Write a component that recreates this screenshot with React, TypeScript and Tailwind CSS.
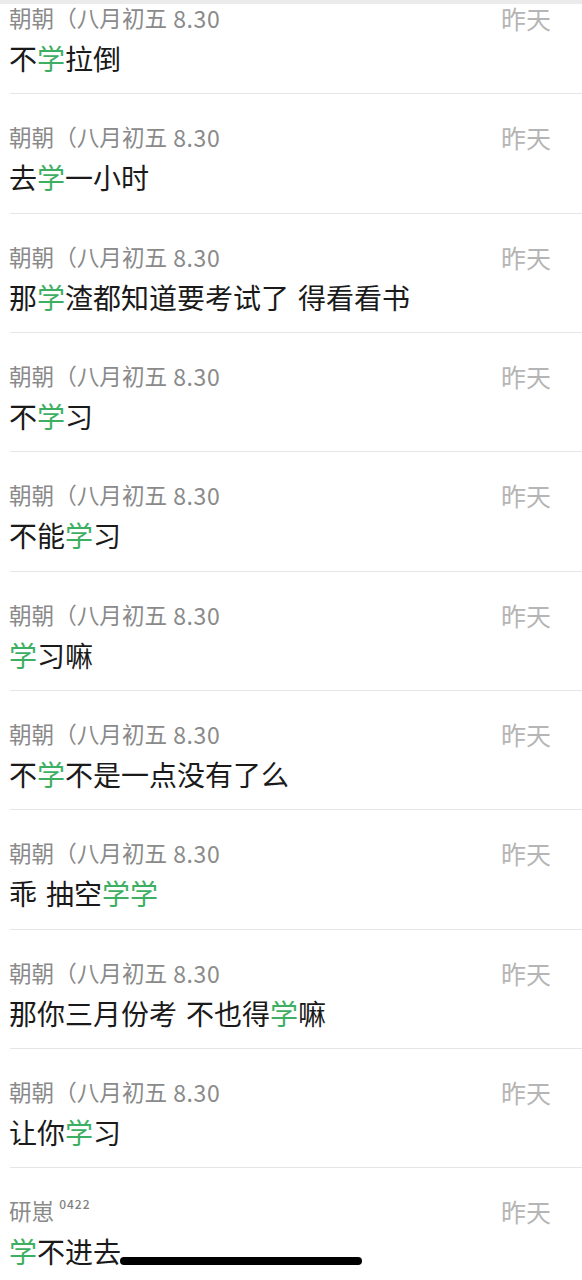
import React from "react";

type Part = { t: string; g?: boolean };
type Row = { name: string; num?: string; sup?: string; msg: Part[] };

const rows: Row[] = [
  { name: "朝朝（八月初五", num: "8.30", msg: [{ t: "不" }, { t: "学", g: true }, { t: "拉倒" }] },
  { name: "朝朝（八月初五", num: "8.30", msg: [{ t: "去" }, { t: "学", g: true }, { t: "一小时" }] },
  { name: "朝朝（八月初五", num: "8.30", msg: [{ t: "那" }, { t: "学", g: true }, { t: "渣都知道要考试了" }, { t: " ", }, { t: "得看看书" }] },
  { name: "朝朝（八月初五", num: "8.30", msg: [{ t: "不" }, { t: "学", g: true }, { t: "习" }] },
  { name: "朝朝（八月初五", num: "8.30", msg: [{ t: "不能" }, { t: "学", g: true }, { t: "习" }] },
  { name: "朝朝（八月初五", num: "8.30", msg: [{ t: "学", g: true }, { t: "习嘛" }] },
  { name: "朝朝（八月初五", num: "8.30", msg: [{ t: "不" }, { t: "学", g: true }, { t: "不是一点没有了么" }] },
  { name: "朝朝（八月初五", num: "8.30", msg: [{ t: "乖" }, { t: " " }, { t: "抽空" }, { t: "学学", g: true }] },
  { name: "朝朝（八月初五", num: "8.30", msg: [{ t: "那你三月份考" }, { t: " " }, { t: "不也得" }, { t: "学", g: true }, { t: "嘛" }] },
  { name: "朝朝（八月初五", num: "8.30", msg: [{ t: "让你" }, { t: "学", g: true }, { t: "习" }] },
  { name: "研崽", sup: "0422", msg: [{ t: "学", g: true }, { t: "不进去" }] },
];

const font = { fontFamily: '"Noto Sans CJK SC", "Noto Sans", sans-serif' };

export default function App() {
  return (
    <div className="relative h-[1280px] w-[582px] overflow-hidden bg-white" style={font}>
      <div className="mt-[-25px] flex flex-col">
        {rows.map((r, i) => (
          <div key={i} className="ml-[10px] h-[119.33px] shrink-0 border-b border-[#e6e6e6] pr-[30px] pt-[28px]">
            <div className="flex items-start justify-between">
              <div className="ml-[-1px] flex items-start text-[22.6px] leading-[30px] text-[#8a8a8a]">
                <span>{r.name}</span>
                {r.num && <span className="ml-[6px] text-[23px] tracking-[0.6px]">{r.num}</span>}
                {r.sup && <span className="ml-[5px] mt-[-2px] text-[12px] font-medium leading-[20px] tracking-[1px] text-[#808080]">{r.sup}</span>}
              </div>
              <div className="mr-[1px] text-[25px] leading-[30px] text-[#b5b5b5]">昨天</div>
            </div>
            <div className="ml-[-1px] mt-[7px] whitespace-nowrap text-[28px] leading-[36px] text-[#1a1a1a]">
              {r.msg.map((p, j) =>
                p.t === " " ? (
                  <span key={j} className="inline-block w-[9px]" />
                ) : (
                  <span key={j} className={p.g ? "text-[#3daf62]" : ""}>{p.t}</span>
                )
              )}
            </div>
          </div>
        ))}
      </div>
      <div className="absolute left-0 right-0 top-0 h-[4px] bg-[#ebebeb]" />
      <div className="absolute left-[120px] top-[1257px] h-[8px] w-[242px] rounded-full bg-black" />
    </div>
  );
}
